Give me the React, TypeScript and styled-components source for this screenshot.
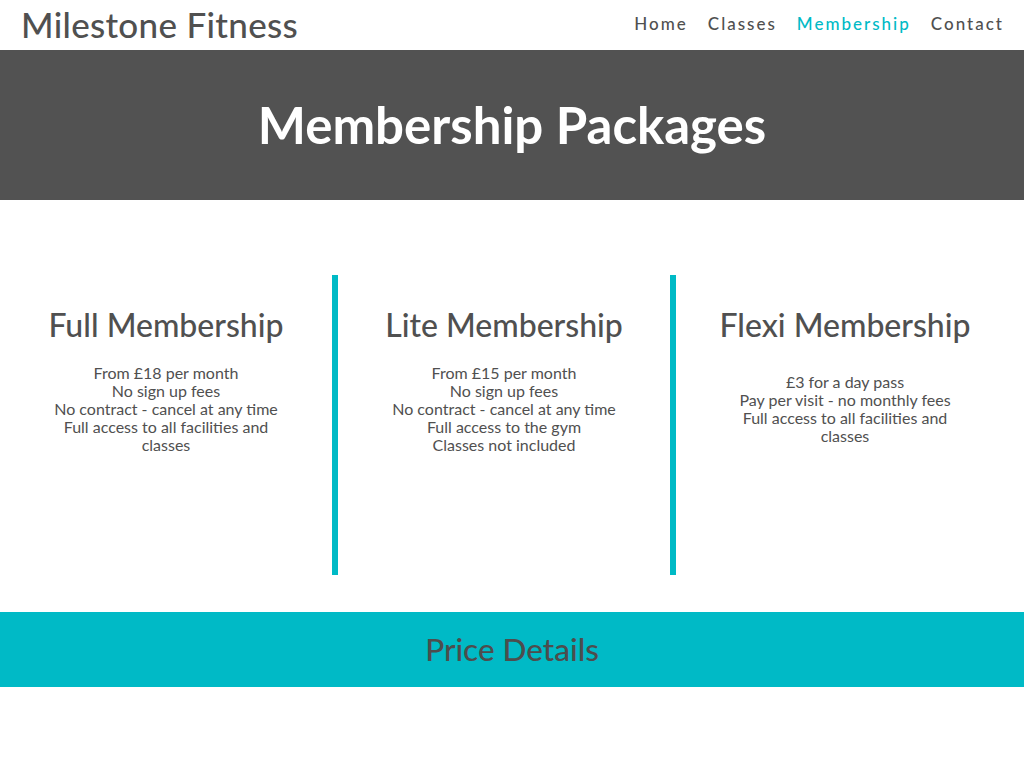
import React from "react";
import styled, { createGlobalStyle } from "styled-components";

const Global = createGlobalStyle`
  html, body { margin: 0; padding: 0; background: #fff; }
  body { font-family: "Lato", "Noto Sans", sans-serif; color: #505050; }
  * { box-sizing: border-box; }
`;

const Header = styled.header`
  height: 50px;
  display: flex;
  align-items: center;
  justify-content: space-between;
  padding: 0 20px 0 21px;
`;

const Logo = styled.div`
  font-size: 35px;
  font-weight: 500;
  color: #505050;
  letter-spacing: 0.3px;
  margin-top: -3px;
`;

const Nav = styled.nav`
  display: flex;
  gap: 20px;
  margin-top: -3px;
`;

const NavLink = styled.a<{ $active?: boolean }>`
  font-size: 17px;
  letter-spacing: 2px;
  color: ${(p) => (p.$active ? "#00bac6" : "#505050")};
  text-decoration: none;
  font-weight: 500;
`;

const Banner = styled.section`
  height: 150px;
  background: #525252;
  display: flex;
  align-items: center;
  justify-content: center;
`;

const BannerTitle = styled.h1`
  margin: 0;
  color: #fff;
  font-family: "Lato", sans-serif;
  font-weight: 700;
  font-size: 51px;
  margin-top: -2px;
`;

const Packages = styled.section`
  display: grid;
  grid-template-columns: 332px 6px 332px 6px 338px;
  padding: 75px 10px 37px 0;
`;

const Divider = styled.div`
  background: #00bac6;
  height: 300px;
`;

const Column = styled.div`
  display: flex;
  flex-direction: column;
  align-items: center;
  text-align: center;
  padding-top: 30px;
`;

const PackTitle = styled.h2`
  margin: 0;
  font-size: 32px;
  font-weight: 500;
  color: #505050;
  line-height: 40px;
`;

const PackBody = styled.div`
  margin-top: 10px;
  height: 108px;
  display: flex;
  flex-direction: column;
  justify-content: center;
  font-size: 16px;
  line-height: 18px;
  color: #505050;
  width: 240px;
`;

const PriceBar = styled.section`
  height: 75px;
  background: #00bac6;
  display: flex;
  align-items: center;
  justify-content: center;
`;

const PriceTitle = styled.h2`
  margin: 0;
  font-size: 31.5px;
  font-weight: 500;
  color: #4d4d4d;
  margin-top: -2px;
`;

const packs = [
  {
    title: "Full Membership",
    lines: [
      "From £18 per month",
      "No sign up fees",
      "No contract - cancel at any time",
      "Full access to all facilities and classes",
    ],
  },
  {
    title: "Lite Membership",
    lines: [
      "From £15 per month",
      "No sign up fees",
      "No contract - cancel at any time",
      "Full access to the gym",
      "Classes not included",
    ],
  },
  {
    title: "Flexi Membership",
    lines: [
      "£3 for a day pass",
      "Pay per visit - no monthly fees",
      "Full access to all facilities and classes",
    ],
  },
];

export default function App() {
  return (
    <>
      <Global />
      <Header>
        <Logo>Milestone Fitness</Logo>
        <Nav>
          <NavLink href="#">Home</NavLink>
          <NavLink href="#">Classes</NavLink>
          <NavLink href="#" $active>
            Membership
          </NavLink>
          <NavLink href="#">Contact</NavLink>
        </Nav>
      </Header>
      <Banner>
        <BannerTitle>Membership Packages</BannerTitle>
      </Banner>
      <Packages>
        {packs.map((p, i) => (
          <React.Fragment key={p.title}>
            {i > 0 && <Divider />}
            <Column>
              <PackTitle>{p.title}</PackTitle>
              <PackBody>
                {p.lines.map((l) => (
                  <div key={l}>{l}</div>
                ))}
              </PackBody>
            </Column>
          </React.Fragment>
        ))}
      </Packages>
      <PriceBar>
        <PriceTitle>Price Details</PriceTitle>
      </PriceBar>
    </>
  );
}
